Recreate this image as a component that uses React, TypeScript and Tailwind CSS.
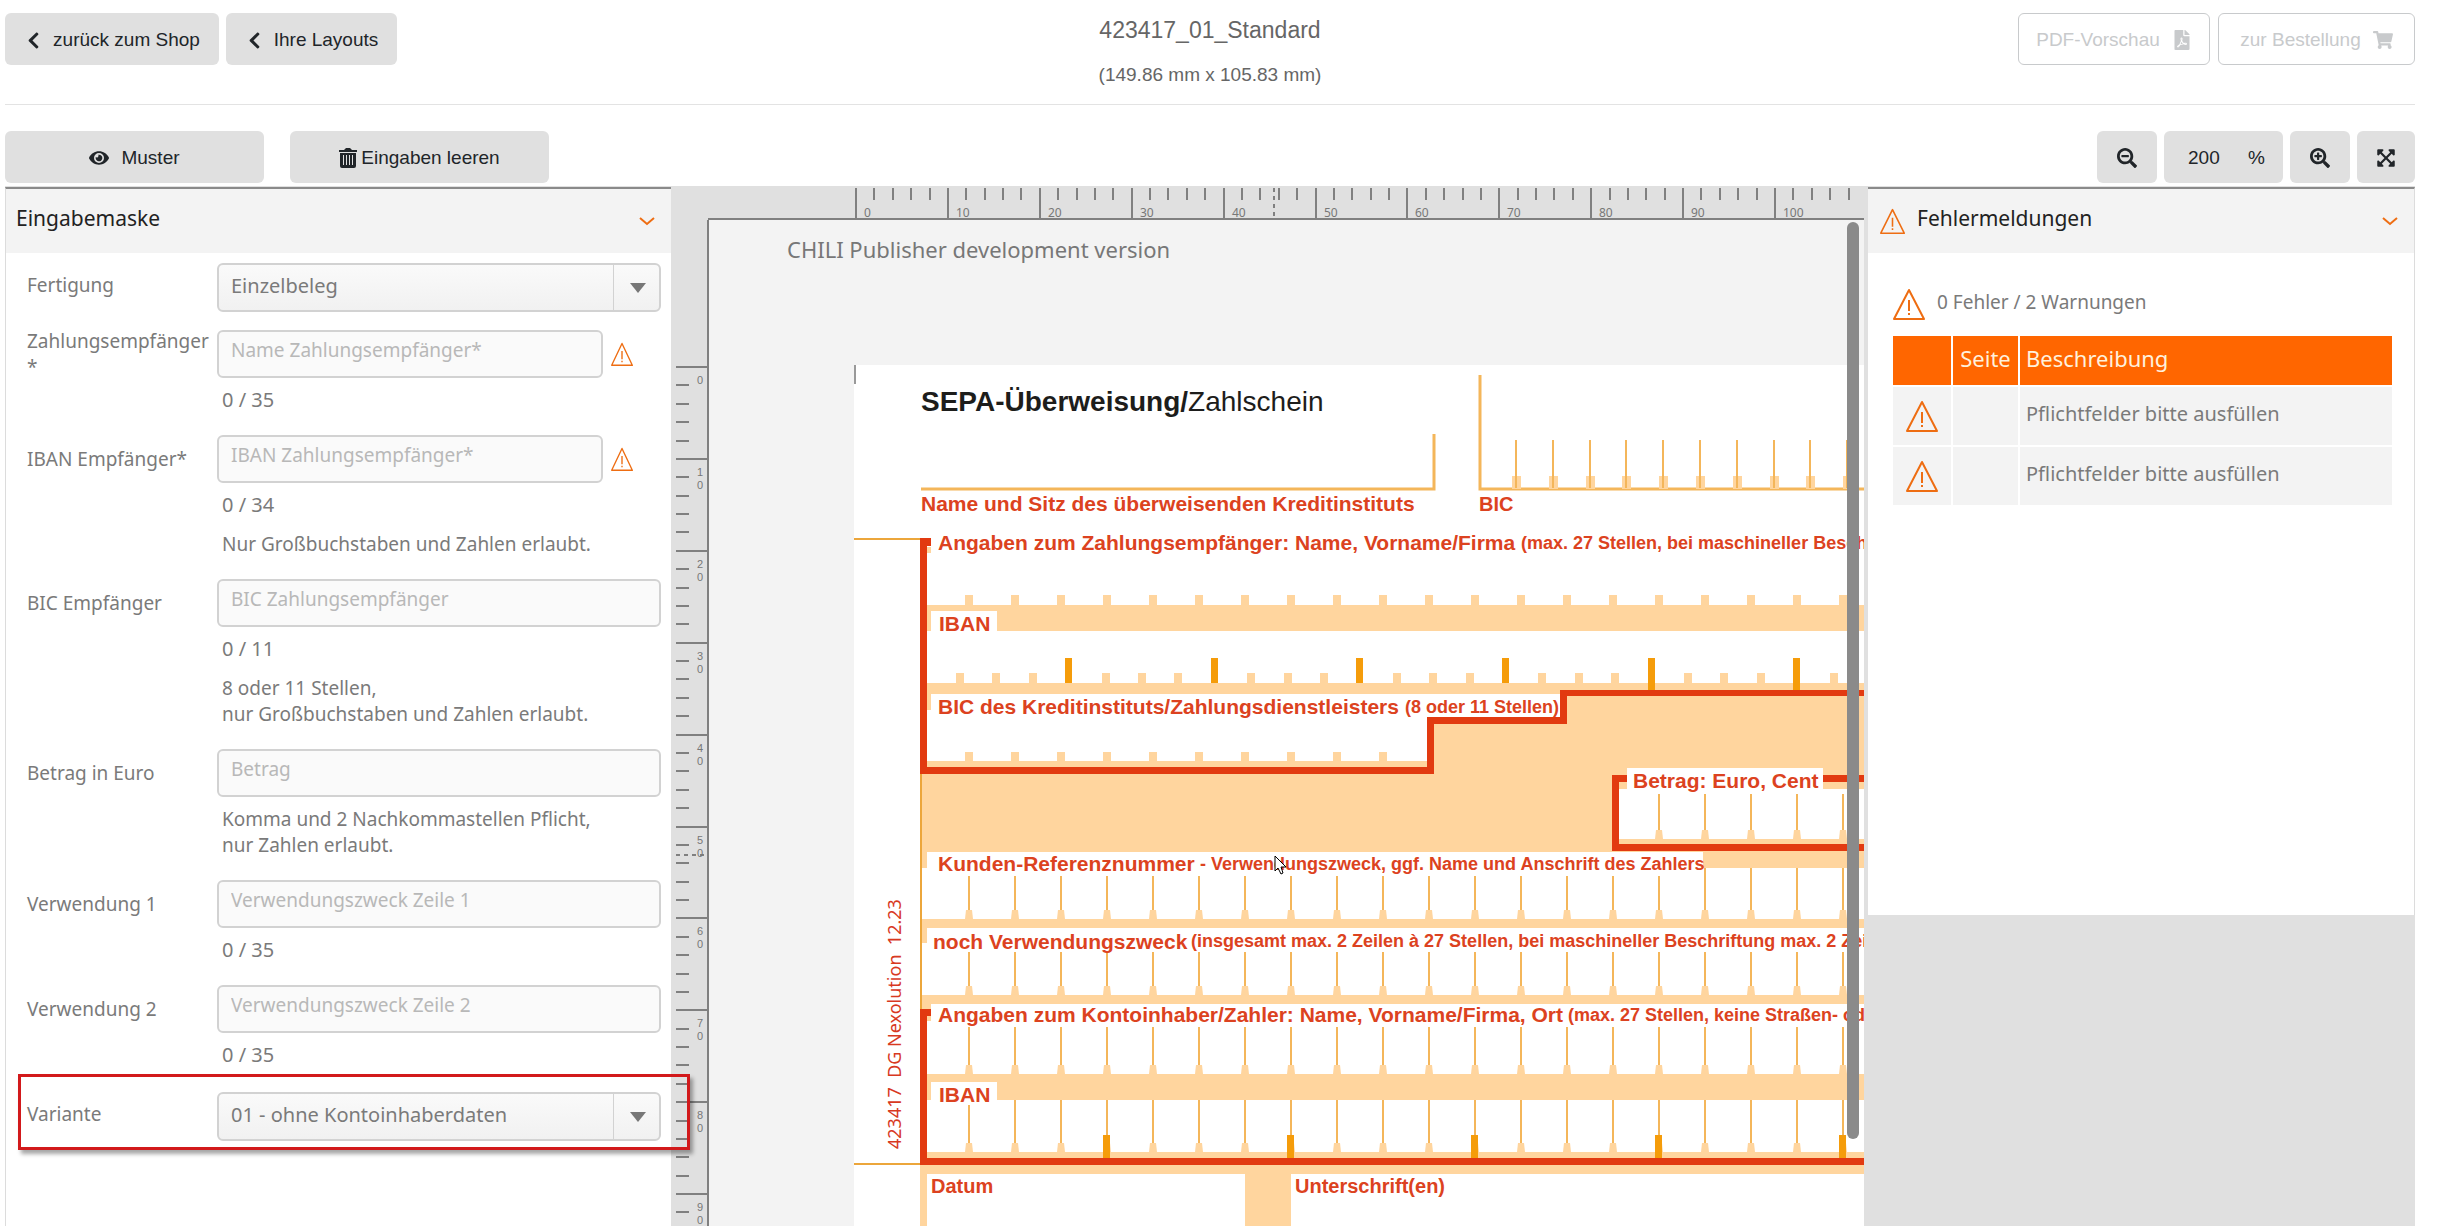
import { useState, type ReactNode } from 'react'
import {
  FaChevronLeft,
  FaExpandArrowsAlt,
  FaEye,
  FaFilePdf,
  FaSearchMinus,
  FaSearchPlus,
  FaShoppingCart,
} from 'react-icons/fa'

const range = (n: number) => [...Array(n).keys()]

// 10 mm on the rulers, in px * 10
const MAJOR = 919
const tickAt = (i: number) => Math.round((i * MAJOR) / 50)

const WARNINGS = [
  { id: 1, text: 'Pflichtfelder bitte ausfüllen' },
  { id: 2, text: 'Pflichtfelder bitte ausfüllen' },
]

function WarningIcon({ className }: { className: string }) {
  return (
    <svg
      viewBox="0 0 32 32"
      preserveAspectRatio="none"
      className={`shrink-0 ${className}`}
      fill="none"
      stroke="#ee6d12"
      strokeWidth="2"
      aria-hidden="true"
    >
      <path d="M16 2 L31 31 H1 Z" strokeLinejoin="round" />
      <path d="M16 12 V23 M16 25 V27" />
    </svg>
  )
}

function ChevronDown() {
  return (
    <svg width="16" height="10" viewBox="0 0 16 10" fill="none" aria-hidden="true">
      <path d="M1 2 L8 8 L15 2" stroke="#ee6d12" strokeWidth="2" />
    </svg>
  )
}

function TrashIcon() {
  return (
    <svg width="18" height="20" viewBox="0 0 18 20" fill="#212529" aria-hidden="true">
      <path d="M0 2 H5 L7 0 H11 L13 2 H18 V4 H0 Z" />
      <path
        fillRule="evenodd"
        d="M1 5 H17 V18 Q17 20 15 20 H3 Q1 20 1 18 Z M4 7 V17 H5 V7 Z M7 7 V17 H8 V7 Z M10 7 V17 H11 V7 Z M13 7 V17 H14 V7 Z"
      />
    </svg>
  )
}

function GreyButton({
  children,
  className,
  label,
}: {
  children: ReactNode
  className: string
  label?: string
}) {
  return (
    <button
      type="button"
      aria-label={label}
      className={`flex h-[52px] items-center justify-center rounded-md bg-[#e0e0e0] pt-0.5 text-[19px] text-[#212529] ${className}`}
    >
      {children}
    </button>
  )
}

function OutlineButton({
  children,
  className,
}: {
  children: ReactNode
  className: string
}) {
  return (
    <button
      type="button"
      className={`flex h-[52px] items-center justify-center gap-3 rounded-md border border-[#c8cacc] pt-0.5 text-[19px] text-[#c8cacc] ${className}`}
    >
      {children}
    </button>
  )
}

function Header() {
  return (
    <header className="flex items-start justify-between border-b border-[#e3e3e3] pt-[13px] pb-[39px]">
      <div className="flex flex-1 gap-[7px]">
        <GreyButton className="w-[214px] gap-[10px]">
          <FaChevronLeft className="text-[19px]" />
          zurück zum Shop
        </GreyButton>
        <GreyButton className="w-[171px] gap-[10px]">
          <FaChevronLeft className="text-[19px]" />
          Ihre Layouts
        </GreyButton>
      </div>
      <div className="flex flex-col items-center text-[#666]">
        <h1 className="h-[43px] text-[23px] leading-[34px]">423417_01_Standard</h1>
        <p className="-mb-8 text-[19px] leading-[38px]">(149.86 mm x 105.83 mm)</p>
      </div>
      <div className="flex flex-1 justify-end gap-2">
        <OutlineButton className="w-[192px]">
          PDF-Vorschau <FaFilePdf className="text-[20px]" />
        </OutlineButton>
        <OutlineButton className="w-[197px]">
          zur Bestellung <FaShoppingCart className="text-[20px]" />
        </OutlineButton>
      </div>
    </header>
  )
}

function Toolbar() {
  const [zoom, setZoom] = useState('200')

  return (
    <div className="flex justify-between pt-[26px] pb-[3px]">
      <div className="flex gap-[26px]">
        <GreyButton className="w-[259px] gap-3">
          <FaEye className="text-[20px]" />
          Muster
        </GreyButton>
        <GreyButton className="w-[259px] gap-1">
          <TrashIcon />
          Eingaben leeren
        </GreyButton>
      </div>
      <div className="flex gap-[7px]">
        <GreyButton className="w-[60px]" label="Verkleinern">
          <FaSearchMinus className="text-[20px]" />
        </GreyButton>
        <label className="flex h-[52px] w-[119px] items-center rounded-md bg-[#e0e0e0] pt-0.5 pl-6 text-[19px] text-[#212529]">
          <input
            className="w-[60px] bg-transparent outline-none"
            aria-label="Zoom"
            value={zoom}
            onChange={(e) => setZoom(e.target.value)}
          />
          %
        </label>
        <GreyButton className="w-[60px]" label="Vergrößern">
          <FaSearchPlus className="text-[20px]" />
        </GreyButton>
        <GreyButton className="w-[58px]" label="Einpassen">
          <FaExpandArrowsAlt className="text-[20px]" />
        </GreyButton>
      </div>
    </div>
  )
}

function Field({
  id,
  label,
  placeholder,
  max,
  hint,
  required,
}: {
  id: string
  label: ReactNode
  placeholder: string
  max?: number
  hint?: ReactNode
  required?: boolean
}) {
  const [value, setValue] = useState('')

  return (
    <div className="mb-[22px]">
      <div className="flex h-12 items-center">
        <label htmlFor={id} className="w-[190px] leading-[26px] whitespace-nowrap">
          {label}
        </label>
        <input
          id={id}
          value={value}
          onChange={(e) => setValue(e.target.value)}
          placeholder={placeholder}
          className="h-12 min-w-0 flex-1 rounded-md border-2 border-[#d2d2d2] bg-[#fafafa] px-3 pb-2 outline-none placeholder:text-[#b8b8b8]"
        />
        {required && <WarningIcon className="mr-7 ml-2 h-6 w-[22px]" />}
      </div>
      {max && (
        <p className="mt-[9px] ml-[195px] text-[20px] leading-[26px]">
          {value.length} / {max}
        </p>
      )}
      {hint && (
        <p className={`ml-[195px] leading-[26px] ${max ? 'mt-[13px]' : 'mt-[9px]'}`}>{hint}</p>
      )}
    </div>
  )
}

function SelectField({
  id,
  label,
  option,
}: {
  id: string
  label: string
  option: string
}) {
  return (
    <div className="flex h-[49px] items-center">
      <label htmlFor={id} className="w-[190px] pb-1">
        {label}
      </label>
      <div className="relative flex-1">
        <select
          id={id}
          className="h-[49px] w-full appearance-none rounded-md border-2 border-[#d2d2d2] bg-linear-to-b from-[#fafafa] to-[#f1f1f1] px-3 pb-1 text-[20px] outline-none"
        >
          <option>{option}</option>
        </select>
        <div className="pointer-events-none absolute inset-y-0 right-0 flex w-[48px] items-center justify-center border-l border-[#d2d2d2]">
          <svg width="16" height="10" viewBox="0 0 16 10" fill="#777" aria-hidden="true">
            <path d="M0 0 H16 L8 10 Z" />
          </svg>
        </div>
      </div>
    </div>
  )
}

function InputPanel() {
  return (
    <aside className="w-[666px] shrink-0 border-t-2 border-l border-t-[#8a8a8a] border-l-[#dcdcdc] bg-white">
      <div className="flex h-[64px] items-center justify-between bg-[#f3f3f3] pr-[16px] pl-[10px]">
        <h2 className="pb-1 text-[21px] text-[#222]">Eingabemaske</h2>
        <ChevronDown />
      </div>
      <form className="pt-[10px] pr-[10px] pl-[21px] text-[19px] text-[#7a7a7a]">
        <div className="mb-[18px]">
          <SelectField id="fertigung" label="Fertigung" option="Einzelbeleg" />
        </div>
        <Field
          id="name"
          label={
            <>
              Zahlungsempfänger
              <br />*
            </>
          }
          placeholder="Name Zahlungsempfänger*"
          max={35}
          required
        />
        <Field
          id="iban"
          label="IBAN Empfänger*"
          placeholder="IBAN Zahlungsempfänger*"
          max={34}
          hint="Nur Großbuchstaben und Zahlen erlaubt."
          required
        />
        <Field
          id="bic"
          label="BIC Empfänger"
          placeholder="BIC Zahlungsempfänger"
          max={11}
          hint={
            <>
              8 oder 11 Stellen,
              <br />
              nur Großbuchstaben und Zahlen erlaubt.
            </>
          }
        />
        <Field
          id="betrag"
          label="Betrag in Euro"
          placeholder="Betrag"
          hint={
            <>
              Komma und 2 Nachkommastellen Pflicht,
              <br />
              nur Zahlen erlaubt.
            </>
          }
        />
        <Field id="zweck1" label="Verwendung 1" placeholder="Verwendungszweck Zeile 1" max={35} />
        <Field id="zweck2" label="Verwendung 2" placeholder="Verwendungszweck Zeile 2" max={35} />
        <div className="relative mt-6">
          <SelectField id="variante" label="Variante" option="01 - ohne Kontoinhaberdaten" />
          <div className="pointer-events-none absolute -top-[18px] -right-[29px] -bottom-[9px] -left-[9px] z-10 border-3 border-[#d2191b] shadow-[3px_4px_4px_rgba(0,0,0,0.35)]" />
        </div>
      </form>
    </aside>
  )
}

function TopRuler() {
  return (
    <svg className="block h-[33px] w-full overflow-visible" stroke="#808080" strokeWidth="2">
      {range(55).map((i) => (
        <path key={i} d={`M${185 + tickAt(i)} 1 V${i % 5 ? 13 : 32}`} />
      ))}
      <line x1="37" y1="32" x2="100%" y2="32" />
      <path d="M603 1 V30" strokeDasharray="4 4" />
      <g fill="#777" stroke="none" fontSize="12">
        {range(11).map((i) => (
          <text key={i} x={193 + tickAt(i * 5)} y="30">
            {i * 10}
          </text>
        ))}
      </g>
    </svg>
  )
}

function LeftRuler() {
  return (
    <svg className="block h-full w-[38px] shrink-0" stroke="#808080" strokeWidth="2">
      {range(48).map((i) => (
        <path key={i} d={`M5 ${147 + tickAt(i)} H${i % 5 ? 18 : 37}`} />
      ))}
      <line x1="37" y1="0" x2="37" y2="100%" />
      <path d="M5 635 H33" strokeDasharray="4 4" />
      <g
        className="font-['Liberation_Sans',Arial,sans-serif]"
        fill="#777"
        stroke="none"
        fontSize="11"
      >
        {range(10).map((i) => (
          <text key={i} y={164 + tickAt(i * 5)}>
            {[...`${i * 10}`].map((digit, row) => (
              <tspan key={row} x="26" dy={row * 13}>
                {digit}
              </tspan>
            ))}
          </text>
        ))}
      </g>
    </svg>
  )
}

const LIGHT = '#ffd59e'
const LINE = '#f4b65a'
const STRONG = '#f59c0a'
const RED = '#e23a10'

// one row of character boxes: thin separators standing on a wider foot
function Comb({
  xs,
  top,
  bottom,
  foot,
}: {
  xs: number[]
  top: number
  bottom: number
  foot: number
}) {
  return (
    <>
      {xs.map((x) => (
        <g key={x}>
          <rect x={x - 1} y={top} width="2" height={bottom - top} fill={LINE} />
          <path d={`M${x - 3} ${bottom - foot} h6 l1 ${foot} h-8 Z`} fill={LIGHT} />
        </g>
      ))}
    </>
  )
}

const COLS = range(20).map((i) => 115 + i * 46)

function TransferForm() {
  return (
    <svg className="block h-full w-full bg-white">
      <path d="M1 0 V19" stroke="#999" strokeWidth="2" />

      <g fill="none" stroke={LINE} strokeWidth="3">
        <path d="M67 124 H580 V69" />
        <path d="M626 10 V124 H1010" />
      </g>
      <path
        d="M0 174 H67 M0 799 H67 M67 409 V645"
        fill="none"
        stroke="#eca63b"
        strokeWidth="2"
      />
      {range(10).map((i) => {
        const x = 662 + Math.round(i * 36.8)
        return (
          <g key={x}>
            <rect x={x - 4} y="111" width="9" height="13" fill={LIGHT} />
            <rect x={x - 1} y="75" width="2" height="48" fill={LINE} />
          </g>
        )
      })}

      <g fill={LIGHT}>
        <path d="M73 240 H1010 V266 H73 Z" />
        <path d="M73 318 H1010 V329 H77 V345 H73 Z" />
        <path d="M73 396 H573 V402 H73 Z" />
        <path d="M68 409 H580 V359 H713 V331 H1010 V503 H849 V487 H73 V503 H68 Z" />
        <path d="M73 182 H77 V188 H73 Z" />
        {COLS.map((x) => (
          <rect key={x} x={x - 4} y="230" width="8" height="10" />
        ))}
        {COLS.slice(0, 10).map((x) => (
          <rect key={x} x={x - 4} y="387" width="8" height="10" />
        ))}
      </g>
      {range(25).map((i) => {
        const x = 106 + Math.round(i * 36.4)
        const wide = i % 4 === 3
        return (
          <rect
            key={x}
            x={x - 4}
            y={wide ? 293 : 308}
            width={wide ? 7 : 8}
            height={wide ? (x > 706 ? 32 : 25) : 10}
            fill={wide ? STRONG : LIGHT}
          />
        )
      })}

      <rect x="765" y="424" width="245" height="50" fill="#fff" />
      <Comb xs={COLS.slice(15)} top={429} bottom={474} foot={9} />

      <Comb xs={COLS.slice(0, 16)} top={511} bottom={554} foot={9} />
      <Comb xs={COLS.slice(16)} top={503} bottom={554} foot={9} />
      <Comb xs={COLS} top={587} bottom={630} foot={9} />
      <Comb xs={COLS} top={662} bottom={709} foot={9} />
      <Comb xs={COLS} top={735} bottom={787} foot={9} />
      <g fill={LIGHT}>
        <path d="M68 554 H1010 V563 H73 V578 H68 Z" />
        <path d="M68 630 H1010 V639 H77 V656 H68 Z" />
        <path d="M73 709 H1010 V735 H73 Z" />
        <path d="M73 787 H1010 V794 H73 Z" />
        <path d="M66 800 H1010 V809 H437 V900 H391 V809 H73 V900 H66 Z" />
      </g>
      {COLS.filter((_, i) => i % 4 === 3).map((x) => (
        <rect key={x} x={x - 4} y="770" width="7" height="24" fill={STRONG} />
      ))}

      <g fill={RED}>
        <path d="M66 173 H77 V181 H73 V402 H573 V352 H706 V325 H1010 V331 H713 V359 H580 V409 H66 Z" />
        <path d="M758 410 H1010 V417 H765 V479 H1010 V486 H758 Z" />
        <path d="M66 644 H77 V651 H73 V793 H1010 V800 H66 Z" />
      </g>
      <g fill="#fff">
        <rect x="77" y="246" width="66" height="21" />
        <rect x="77" y="717" width="66" height="23" />
        <rect x="773" y="403" width="196" height="24" />
      </g>

      <text x="67" y="46" fontSize="28" fill="#1d1d1b">
        <tspan fontWeight="bold">SEPA-Überweisung/</tspan>
        Zahlschein
      </text>
      <g fill="#dc4220" fontSize="21" fontWeight="bold">
        <text x="84" y="185">Angaben zum Zahlungsempfänger: Name, Vorname/Firma</text>
        <text x="85" y="266">IBAN</text>
        <text x="84" y="349">BIC des Kreditinstituts/Zahlungsdienstleisters</text>
        <text x="779" y="423">Betrag: Euro, Cent</text>
        <text x="84" y="506">Kunden-Referenznummer</text>
        <text x="79" y="584">noch Verwendungszweck</text>
        <text x="84" y="657">Angaben zum Kontoinhaber/Zahler: Name, Vorname/Firma, Ort</text>
        <text x="85" y="737">IBAN</text>
        <text x="67" y="146">Name und Sitz des überweisenden Kreditinstituts</text>
      </g>
      <g fill="#dc4220" fontSize="20" fontWeight="bold">
        <text x="625" y="146">BIC</text>
        <text x="77" y="828">Datum</text>
        <text x="441" y="828">Unterschrift(en)</text>
      </g>
      <g fill="#dc4220" fontSize="18" fontWeight="bold">
        <text x="667" y="184">(max. 27 Stellen, bei maschineller Beschriftung max. 35 Stellen)</text>
        <text x="551" y="348">(8 oder 11 Stellen)</text>
        <text x="346" y="505">- Verwendungszweck, ggf. Name und Anschrift des Zahlers</text>
        <text x="337" y="582">
          (insgesamt max. 2 Zeilen à 27 Stellen, bei maschineller Beschriftung max. 2 Zeilen à 35
          Stellen)
        </text>
        <text x="714" y="656">(max. 27 Stellen, keine Straßen- oder Postfachangaben)</text>
      </g>
      <text
        transform="translate(47 784) rotate(-90)"
        className="font-['Noto_Sans',sans-serif] whitespace-pre"
        fontSize="18"
        fill="#d8391f"
      >
        {'423417  DG Nexolution  12.23'}
      </text>
    </svg>
  )
}

function Canvas() {
  return (
    <main className="flex min-w-0 flex-1 flex-col bg-[#e0e0e0] pr-1">
      <TopRuler />
      <div className="flex min-h-0 flex-1">
        <LeftRuler />
        <div className="relative flex min-w-0 flex-1 flex-col overflow-hidden bg-[#f3f3f3]">
          <p className="h-[145px] shrink-0 pt-[13px] pl-[78px] text-[22px] text-[#777]">
            CHILI Publisher development version
          </p>
          <div className="ml-[145px] min-h-0 flex-1 font-['Liberation_Sans',Arial,sans-serif]">
            <TransferForm />
          </div>
          <div className="absolute top-[2px] right-[5px] h-[917px] w-3 rounded-full bg-[#8a8a8a]" />
          <svg
            className="absolute top-[635px] left-[565px]"
            width="14"
            height="21"
            viewBox="0 0 14 21"
            aria-hidden="true"
          >
            <path
              d="M1 1 V16 L4 13 L7 19 L9 18 L7 12 H12 Z"
              fill="#fff"
              stroke="#000"
              strokeWidth="1"
            />
          </svg>
        </div>
      </div>
    </main>
  )
}

function MessagesPanel() {
  return (
    <aside className="w-[547px] shrink-0 bg-[#e0e0e0]">
      <div className="border-t-2 border-r border-t-[#8a8a8a] border-r-[#dcdcdc] bg-white">
        <div className="flex h-[64px] items-center bg-[#f3f3f3] pr-[16px] pl-3">
          <WarningIcon className="h-[26px] w-[25px]" />
          <h2 className="flex-1 pb-1 pl-3 text-[21px] text-[#222]">Fehlermeldungen</h2>
          <ChevronDown />
        </div>
        <div className="h-[662px] pt-[34px] pr-[22px] pl-[25px] text-[#7a7a7a]">
          <p className="mb-[15px] flex h-[34px] items-center gap-3 text-[19px]">
            <WarningIcon className="h-8 w-8" />
            <span className="pb-1">0 Fehler / 2 Warnungen</span>
          </p>
          <table className="w-full border-separate border-spacing-0">
            <thead>
              <tr className="h-[51px] bg-[#ff6600] text-left text-[22px] text-[#fff1dc]">
                <th className="w-[60px] border-r-2 border-b-2 border-white font-normal" />
                <th className="w-[67px] border-r-2 border-b-2 border-white px-1 pb-1 text-center font-normal">
                  Seite
                </th>
                <th className="border-b-2 border-white pb-1 pl-[6px] font-normal">Beschreibung</th>
              </tr>
            </thead>
            <tbody>
              {WARNINGS.map(({ id, text }) => (
                <tr key={id} className="h-[60px] bg-[#f3f3f3] text-[20px]">
                  <td className="border-r-2 border-b-2 border-white pl-[13px]">
                    <WarningIcon className="h-8 w-8" />
                  </td>
                  <td className="border-r-2 border-b-2 border-white" />
                  <td className="border-b-2 border-white pb-1 pl-[6px]">{text}</td>
                </tr>
              ))}
            </tbody>
          </table>
        </div>
      </div>
    </aside>
  )
}

export default function App() {
  return (
    <div className="flex h-screen flex-col overflow-hidden bg-white pr-[27px] pl-[5px] font-['Liberation_Sans',Arial,sans-serif]">
      <Header />
      <Toolbar />
      <div className="flex min-h-0 flex-1 border-t border-[#e0e0e0] font-['Noto_Sans',sans-serif]">
        <InputPanel />
        <Canvas />
        <MessagesPanel />
      </div>
    </div>
  )
}
